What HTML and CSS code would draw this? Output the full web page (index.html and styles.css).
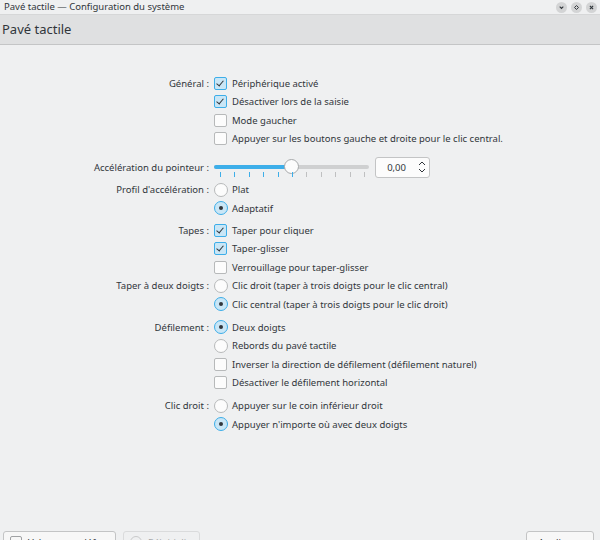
FILE: index.html
```html
<!DOCTYPE html>
<html lang="fr">
<head>
<meta charset="utf-8">
<title>Pavé tactile</title>
<link rel="stylesheet" href="styles.css">
</head>
<body>
<div class="app">
  <div class="titlebar">
    <span class="title">Pavé tactile — Configuration du système</span>
    <div class="wbtns">
      <span class="wbtn"><svg viewBox="0 0 10 10" width="10" height="10"><path d="M3 4 L5 6 L7 4" fill="none" stroke="#31363b" stroke-width="1.2"/></svg></span>
      <span class="wbtn"><svg viewBox="0 0 10 10" width="10" height="10"><path d="M5 2.8 L7.2 5 L5 7.2 L2.8 5 Z" fill="none" stroke="#31363b" stroke-width="1.1"/></svg></span>
      <span class="wbtn"><svg viewBox="0 0 10 10" width="10" height="10"><path d="M3.2 3.2 L6.8 6.8 M6.8 3.2 L3.2 6.8" fill="none" stroke="#31363b" stroke-width="1.2"/></svg></span>
    </div>
  </div>
  <div class="header">Pavé tactile</div>
  <main class="form">
    <div class="lbl">Général :</div>
    <div class="opt"><span class="cb on"></span>Périphérique activé</div>
    <div class="lbl"></div>
    <div class="opt"><span class="cb on"></span>Désactiver lors de la saisie</div>
    <div class="lbl"></div>
    <div class="opt"><span class="cb"></span>Mode gaucher</div>
    <div class="lbl"></div>
    <div class="opt"><span class="cb"></span>Appuyer sur les boutons gauche et droite pour le clic central.</div>

    <div class="lbl sliderrow gapl">Accélération du pointeur :</div>
    <div class="opt sliderrow gapl">
      <div class="slider">
        <div class="groove"><div class="fill"></div></div>
        <div class="thumb"></div>
        <div class="ticks">
          <i class="b"></i><i class="b"></i><i class="b"></i><i class="b"></i><i class="b"></i><i class="b"></i><i></i><i></i><i></i><i></i><i></i>
        </div>
      </div>
      <div class="spin">
        <span class="val">0,00</span>
        <svg class="arrows" viewBox="0 0 10 16" width="10" height="16"><path d="M2 6 L5 3 L8 6 M2 10 L5 13 L8 10" fill="none" stroke="#31363b" stroke-width="1"/></svg>
      </div>
    </div>
    <div class="lbl">Profil d'accélération :</div>
    <div class="opt"><span class="rb"></span>Plat</div>
    <div class="lbl"></div>
    <div class="opt"><span class="rb on"></span>Adaptatif</div>

    <div class="lbl gaps">Tapes :</div>
    <div class="opt gaps"><span class="cb on"></span>Taper pour cliquer</div>
    <div class="lbl"></div>
    <div class="opt"><span class="cb on"></span>Taper-glisser</div>
    <div class="lbl"></div>
    <div class="opt"><span class="cb"></span>Verrouillage pour taper-glisser</div>
    <div class="lbl">Taper à deux doigts :</div>
    <div class="opt"><span class="rb"></span>Clic droit (taper à trois doigts pour le clic central)</div>
    <div class="lbl"></div>
    <div class="opt"><span class="rb on"></span>Clic central (taper à trois doigts pour le clic droit)</div>

    <div class="lbl gap">Défilement :</div>
    <div class="opt gap"><span class="rb on"></span>Deux doigts</div>
    <div class="lbl"></div>
    <div class="opt"><span class="rb"></span>Rebords du pavé tactile</div>
    <div class="lbl"></div>
    <div class="opt"><span class="cb"></span>Inverser la direction de défilement (défilement naturel)</div>
    <div class="lbl"></div>
    <div class="opt"><span class="cb"></span>Désactiver le défilement horizontal</div>

    <div class="lbl gap">Clic droit :</div>
    <div class="opt gap"><span class="rb"></span>Appuyer sur le coin inférieur droit</div>
    <div class="lbl"></div>
    <div class="opt"><span class="rb on"></span>Appuyer n'importe où avec deux doigts</div>
  </main>
  <footer class="footer">
    <div class="btn wide"><span class="bicon"></span>Valeurs par défaut</div>
    <div class="btn dis"><span class="bicon round"></span>Réinitialiser</div>
    <div class="spacer"></div>
    <div class="btn apply">Appliquer</div>
  </footer>
</div>
</body>
</html>
```

FILE: styles.css
```css
html, body {
  margin: 0;
  padding: 0;
}
body {
  font-family: "Noto Sans", "DejaVu Sans", sans-serif;
  font-size: 9.5px;
  color: #31363b;
  background: #eff0f1;
}
.app {
  width: 600px;
  height: 540px;
  display: flex;
  flex-direction: column;
  overflow: hidden;
}
.titlebar {
  height: 15px;
  flex: 0 0 15px;
  display: flex;
  align-items: center;
  justify-content: space-between;
  background: #eff0f1;
  border-bottom: 1px solid #d6d7d8;
  box-sizing: border-box;
  padding: 0 3px 0 4px;
}
.title {
  font-size: 9.5px;
  line-height: 14px;
}
.wbtns {
  display: flex;
  gap: 4px;
  align-items: center;
}
.wbtn {
  width: 11px;
  height: 11px;
  border-radius: 50%;
  background: #d3d4d5;
  display: flex;
  align-items: center;
  justify-content: center;
}
.wbtn svg {
  width: 9px;
  height: 9px;
}
.header {
  flex: 0 0 30px;
  height: 30px;
  box-sizing: border-box;
  background: #dfe0e1;
  border-bottom: 1px solid #c4c5c6;
  font-size: 13px;
  line-height: 29px;
  padding-left: 2px;
}
.form {
  flex: 1;
  display: grid;
  grid-template-columns: 209px 1fr;
  grid-auto-rows: auto;
  column-gap: 5px;
  align-content: start;
  padding-top: 29px;
}
.lbl {
  height: 18.5px;
  display: flex;
  align-items: center;
  justify-content: flex-end;
  white-space: nowrap;
}
.opt {
  height: 18.5px;
  display: flex;
  align-items: center;
  white-space: nowrap;
}
.gap {
  margin-top: 4.5px;
}
.gaps {
  margin-top: 3.5px;
}
.gapl {
  margin-top: 5.5px;
}
.sliderrow {
  height: 27px;
}
.cb {
  width: 13px;
  height: 13px;
  box-sizing: border-box;
  border: 1px solid #b7b9ba;
  border-radius: 2px;
  background: #fcfcfc;
  margin-right: 5px;
  flex: 0 0 auto;
  position: relative;
}
.cb.on {
  border-color: #3daee9;
  background: #c9e6f6;
}
.cb.on::after {
  content: "";
  position: absolute;
  left: 3.2px;
  top: 1.2px;
  width: 3px;
  height: 6px;
  border-right: 1.6px solid #31363b;
  border-bottom: 1.6px solid #31363b;
  transform: rotate(40deg);
}
.rb {
  width: 14px;
  height: 14px;
  box-sizing: border-box;
  border: 1px solid #b7b9ba;
  border-radius: 50%;
  background: #fcfcfc;
  margin-right: 4px;
  flex: 0 0 auto;
  display: flex;
  align-items: center;
  justify-content: center;
}
.rb.on {
  border-color: #3daee9;
  background: #c9e6f6;
}
.rb.on::after {
  content: "";
  width: 4px;
  height: 4px;
  border-radius: 50%;
  background: #31363b;
}
.slider {
  position: relative;
  width: 155px;
  height: 26px;
}
.groove {
  position: absolute;
  left: 0;
  right: 0;
  top: 10.5px;
  height: 4px;
  border-radius: 2px;
  background: #cfd0d1;
  overflow: hidden;
}
.fill {
  width: 77px;
  height: 100%;
  background: #3daee9;
}
.thumb {
  position: absolute;
  left: 70px;
  top: 5px;
  width: 15px;
  height: 15px;
  box-sizing: border-box;
  border-radius: 50%;
  background: #fcfcfc;
  border: 1px solid #a7a9ab;
}
.ticks {
  position: absolute;
  left: 6px;
  top: 17.5px;
  width: 145px;
  display: flex;
  justify-content: space-between;
}
.ticks i {
  display: block;
  width: 1px;
  height: 5px;
  background: #bfc0c1;
}
.ticks i.b {
  background: #3daee9;
}
.spin {
  margin-left: 6px;
  width: 55px;
  height: 21px;
  box-sizing: border-box;
  background: #fcfcfc;
  border: 1px solid #c3c4c5;
  border-radius: 3px;
  display: flex;
  align-items: center;
  justify-content: flex-end;
  padding-right: 2px;
}
.val {
  margin-right: 11px;
}
.footer {
  flex: 0 0 9px;
  height: 9px;
  display: flex;
  align-items: flex-start;
  padding: 0 6px 0 3px;
  gap: 7px;
}
.btn {
  flex: 0 0 auto;
  height: 22px;
  box-sizing: border-box;
  border: 1px solid #c3c4c5;
  border-radius: 3px;
  background: #f7f7f7;
  display: flex;
  align-items: center;
  padding: 0 6px;
  gap: 6px;
  white-space: nowrap;
}
.btn.wide {
  width: 113px;
}
.btn.dis {
  width: 77px;
  color: #a5a6a8;
  border-color: #dadbdc;
  background: #eff0f1;
}
.btn.apply {
  width: 68px;
  justify-content: center;
}
.bicon {
  width: 10px;
  height: 10px;
  flex: 0 0 auto;
  border: 1px solid #a0a2a4;
  border-radius: 2px;
}
.bicon.round {
  border-radius: 50%;
  border-color: #c9cacb;
}
.spacer {
  flex: 1;
}
```
